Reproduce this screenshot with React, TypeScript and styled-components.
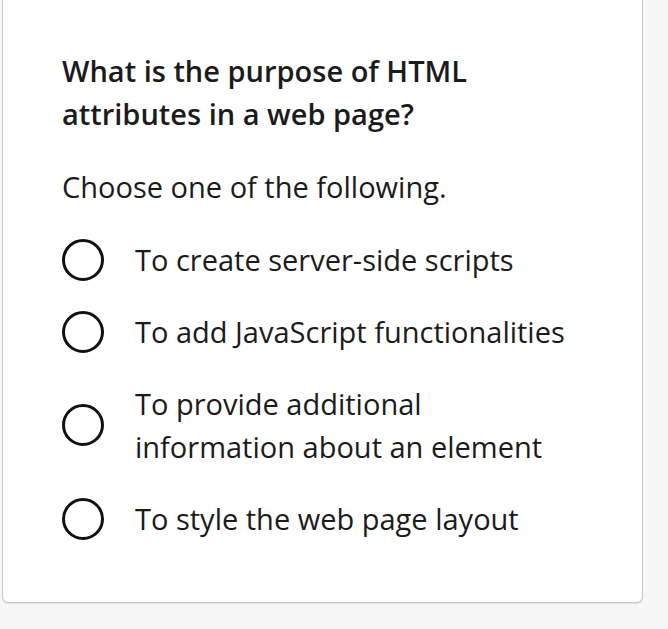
import React from 'react';
import styled, { createGlobalStyle } from 'styled-components';

const GlobalStyle = createGlobalStyle`
  html, body {
    margin: 0;
    padding: 0;
    background: #f7f7f7;
  }
  body {
    font-family: "Open Sans", "Noto Sans", sans-serif;
    color: #1b1b1b;
  }
`;

const options = [
  'To create server-side scripts',
  'To add JavaScript functionalities',
  'To provide additional information about an element',
  'To style the web page layout',
];

const App = () => {
  return (
    <>
      <GlobalStyle />
      <Page>
        <Card>
          <Question>What is the purpose of HTML attributes in a web page?</Question>
          <Prompt>Choose one of the following.</Prompt>
          <OptionList>
            {options.map((text) => (
              <OptionRow key={text}>
                <Radio />
                <OptionText>{text}</OptionText>
              </OptionRow>
            ))}
          </OptionList>
        </Card>
      </Page>
    </>
  );
};

export default App;

const Page = styled.div`
  width: 668px;
  height: 629px;
  padding: 0 25px 0 2px;
  box-sizing: border-box;
`;

const Card = styled.div`
  box-sizing: border-box;
  width: 641px;
  height: 603px;
  background: #ffffff;
  border: 1px solid #c9c9c9;
  border-top: none;
  border-radius: 0 0 6px 6px;
  box-shadow: 0 1px 1px rgba(0, 0, 0, 0.08);
  padding: 49px 40px 0 59px;
  display: flex;
  flex-direction: column;
  gap: 30px;
`;

const Question = styled.h2`
  margin: 0;
  max-width: 440px;
  font-size: 29px;
  font-weight: 600;
  line-height: 43px;
`;

const Prompt = styled.p`
  margin: 0;
  font-size: 29px;
  font-weight: 400;
  line-height: 43px;
`;

const OptionList = styled.div`
  display: flex;
  flex-direction: column;
  gap: 29px;
`;

const OptionRow = styled.label`
  display: flex;
  align-items: center;
  gap: 31px;
  cursor: pointer;
`;

const Radio = styled.span`
  flex: none;
  width: 42px;
  height: 42px;
  box-sizing: border-box;
  border: 3.5px solid #111;
  border-radius: 50%;
`;

const OptionText = styled.span`
  max-width: 445px;
  font-size: 29px;
  line-height: 43px;
`;
